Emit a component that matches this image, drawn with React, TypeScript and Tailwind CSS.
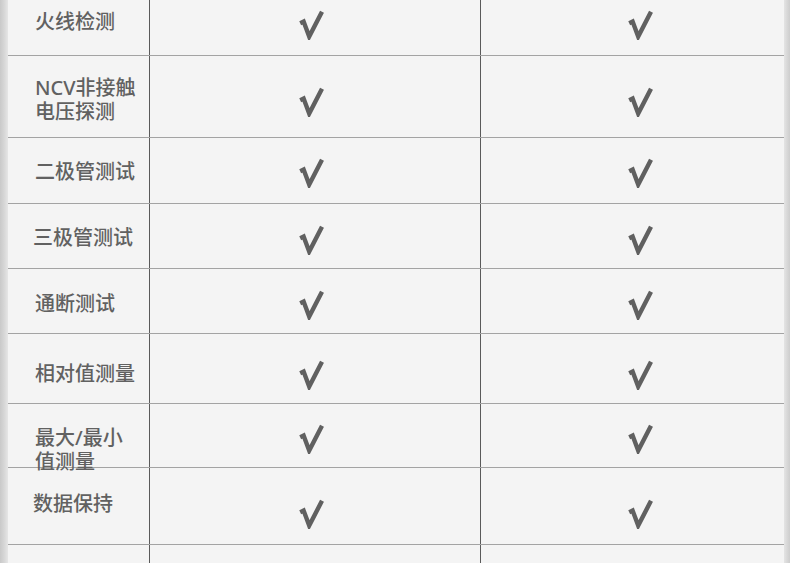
const rows = [
  { label: ["火线检测"], h: "h-[56px]", textPt: "pt-[10px]", textPl: "pl-[27px]", checkPt: "pt-[10px]" },
  { label: ["NCV非接触", "电压探测"], h: "h-[82px]", textPt: "pt-[20px]", textPl: "pl-[27px]", checkPt: "pt-[31px]" },
  { label: ["二极管测试"], h: "h-[66px]", textPt: "pt-[22px]", textPl: "pl-[27px]", checkPt: "pt-[20px]" },
  { label: ["三极管测试"], h: "h-[65px]", textPt: "pt-[22px]", textPl: "pl-[25px]", checkPt: "pt-[21px]" },
  { label: ["通断测试"], h: "h-[65px]", textPt: "pt-[23px]", textPl: "pl-[27px]", checkPt: "pt-[21px]" },
  { label: ["相对值测量"], h: "h-[70px]", textPt: "pt-[28px]", textPl: "pl-[27px]", checkPt: "pt-[26px]" },
  { label: ["最大/最小", "值测量"], h: "h-[64px]", textPt: "pt-[22px]", textPl: "pl-[27px]", checkPt: "pt-[20px]" },
  { label: ["数据保持"], h: "h-[77px]", textPt: "pt-[24px]", textPl: "pl-[25px]", checkPt: "pt-[31px]" },
];

function Check() {
  return (
    <svg width="25" height="30" viewBox="0 0 25 30" className="block">
      <path
        d="M1.2 13.2 L4.6 11.6 L10.2 26.6 L23 1.8"
        fill="none"
        stroke="#606060"
        strokeWidth="4.4"
        strokeLinejoin="miter"
        strokeMiterlimit="3"
      />
    </svg>
  );
}

export default function App() {
  return (
    <div
      className="flex w-[790px] h-[563px] overflow-hidden bg-[#f4f4f4] text-[#616161]"
      style={{ fontFamily: '"Noto Sans", "Noto Sans CJK SC", sans-serif' }}
    >
      <div className="w-[8px] shrink-0 bg-gradient-to-r from-[#c9c9c9] via-[#d6d6d6] to-[#e6e6e6]" />
      <div className="flex-1 flex flex-col">
        {rows.map((row, i) => (
          <div key={i} className={`flex shrink-0 border-b border-[#a3a3a3] ${row.h}`}>
            <div className={`w-[142px] shrink-0 border-r border-[#5a5a5a] ${row.textPt} ${row.textPl}`}>
              <div className="text-[20px] leading-[24px] font-medium whitespace-nowrap">
                {row.label.map((l) => (
                  <div key={l}>{l}</div>
                ))}
              </div>
            </div>
            <div className={`w-[331px] shrink-0 border-r border-[#5a5a5a] pl-[149px] ${row.checkPt}`}>
              <Check />
            </div>
            <div className={`flex-1 pl-[147px] ${row.checkPt}`}>
              <Check />
            </div>
          </div>
        ))}
        <div className="flex flex-1">
          <div className="w-[142px] shrink-0 border-r border-[#5a5a5a]" />
          <div className="w-[331px] shrink-0 border-r border-[#5a5a5a]" />
          <div className="flex-1" />
        </div>
      </div>
      <div className="w-[6px] shrink-0 bg-gradient-to-r from-[#e4e4e4] to-[#cdcdcd]" />
    </div>
  );
}
